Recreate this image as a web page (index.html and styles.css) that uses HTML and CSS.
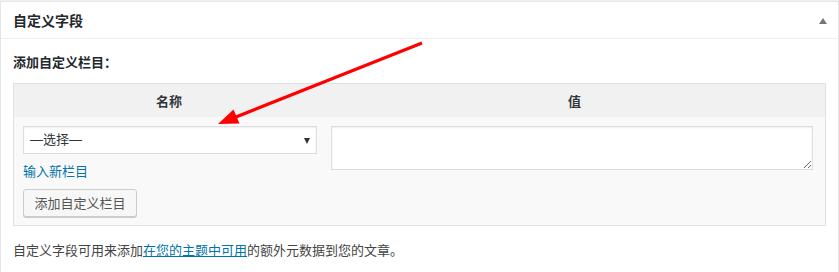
FILE: index.html
```html
<!DOCTYPE html>
<html lang="zh-CN">
<head>
    <meta charset="UTF-8">
    <title>自定义字段</title>
    <link rel="stylesheet" href="styles.css">
</head>
<body>
    <div class="postbox">
        <h2 class="hndle">
            <span>自定义字段</span>
            <span class="toggle"></span>
        </h2>
        <div class="inside">
            <p class="add-title">添加自定义栏目：</p>
            <table class="meta-table">
                <thead>
                    <tr>
                        <th class="col-key">名称</th>
                        <th class="col-val">值</th>
                    </tr>
                </thead>
                <tbody>
                    <tr>
                        <td class="col-key">
                            <div class="fake-select">
                                <span class="choose">—选择—</span>
                                <span class="caret"></span>
                            </div>
                            <a class="new-key" href="#">输入新栏目</a>
                        </td>
                        <td class="col-val">
                            <textarea class="meta-value"></textarea>
                        </td>
                    </tr>
                    <tr>
                        <td colspan="2" class="submit-cell">
                            <button class="button">添加自定义栏目</button>
                        </td>
                    </tr>
                </tbody>
            </table>
            <p class="note">自定义字段可用来添加<a href="#">在您的主题中可用</a>的额外元数据到您的文章。</p>
        </div>
    </div>
    <!-- 标注箭头 -->
    <svg class="annotation" width="839" height="272" viewBox="0 0 839 272">
        <line x1="422" y1="43" x2="236" y2="117" stroke="#ff0000" stroke-width="3.2"/>
        <polygon points="218,124 239.5,123.5 233.5,109.5" fill="#ff0000"/>
    </svg>
</body>
</html>
```

FILE: styles.css
```css
*{
    box-sizing: border-box;
}
html, body{
    height: 272px;
}
body{
    margin: 0;
    padding-top: 1px;
    background-color: #f1f1f1;
    font-family: "Noto Sans CJK SC", "Noto Sans", sans-serif;
    font-size: 13px;
    color: #444;
    position: relative;
    overflow: hidden;
}
.postbox{
    width: 839px;
    height: 271px;
    background-color: #fff;
    border: 1px solid #e5e5e5;
    border-bottom: none;
}
.hndle{
    margin: 0;
    height: 37px;
    padding: 0 11px 0 12px;
    border-bottom: 1px solid #eee;
    display: flex;
    align-items: center;
    justify-content: space-between;
    font-size: 14px;
    font-weight: bold;
    color: #23282d;
    line-height: 20px;
}
.toggle{
    width: 0;
    height: 0;
    border-left: 4px solid transparent;
    border-right: 4px solid transparent;
    border-bottom: 6px solid #72777c;
    margin-top: 1px;
}
.inside{
    padding: 0 12px;
}
.add-title{
    margin: 13px 0 11px;
    line-height: 20px;
    font-weight: bold;
    color: #23282d;
}
.meta-table{
    width: 813px;
    border: 1px solid #e1e1e1;
    border-spacing: 0;
    background-color: #f9f9f9;
}
.meta-table th{
    height: 33px;
    background-color: #f1f1f1;
    font-weight: 600;
    color: #32373c;
    text-align: center;
    padding: 0;
    line-height: 20px;
}
.meta-table th.col-key{
    width: 310px;
}
.meta-table td{
    vertical-align: top;
    padding: 0;
}
td.col-key{
    padding: 9px 7px 0 9px;
}
td.col-val{
    padding: 9px 12px 0 7px;
}
.fake-select{
    height: 28px;
    background-color: #fff;
    border: 1px solid #ddd;
    box-shadow: inset 0 1px 2px rgba(0,0,0,.07);
    display: flex;
    align-items: center;
    justify-content: space-between;
    padding: 0 6px 0 6px;
    color: #32373c;
    line-height: 20px;
}
.choose{
    font-family: "Liberation Sans", "Noto Sans CJK SC", sans-serif;
}
.caret{
    width: 0;
    height: 0;
    border-left: 3.5px solid transparent;
    border-right: 3.5px solid transparent;
    border-top: 6px solid #333;
    margin-top: 1px;
}
.new-key{
    display: block;
    margin-top: 7px;
    line-height: 20px;
    color: #0073aa;
    text-decoration: none;
}
.meta-value{
    display: block;
    width: 482px;
    height: 44px;
    margin: 0;
    border: 1px solid #ddd;
    box-shadow: inset 0 1px 2px rgba(0,0,0,.07);
    background-color: #fff;
    font-family: inherit;
    font-size: 13px;
}
td.submit-cell{
    padding: 8px 9px 8px;
}
.button{
    height: 28px;
    width: 114px;
    padding: 0;
    background-color: #f7f7f7;
    border: 1px solid #ccc;
    border-radius: 3px;
    box-shadow: 0 1px 0 #ccc;
    color: #555;
    font-family: inherit;
    font-size: 13px;
    line-height: 26px;
}
.note{
    margin: 14px 0 0;
    line-height: 20px;
    color: #444;
}
.note a{
    color: #0073aa;
    text-decoration: underline;
}
.annotation{
    position: absolute;
    left: 0;
    top: 0;
    pointer-events: none;
}
```
